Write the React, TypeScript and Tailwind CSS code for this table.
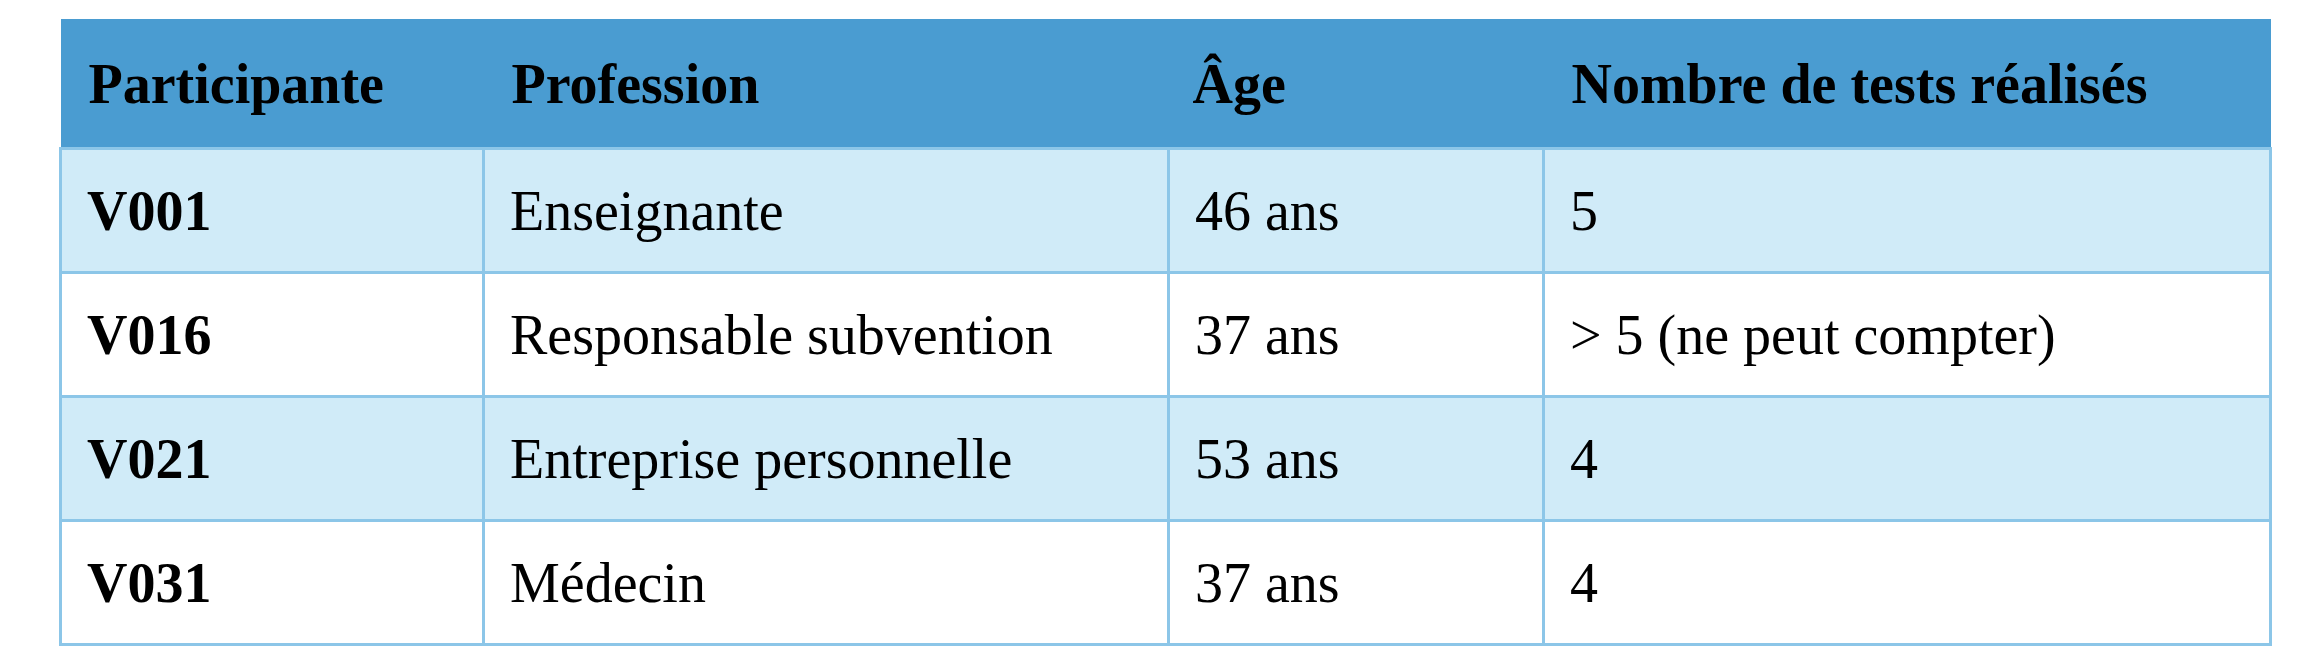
import React from "react";

const rows = [
  ["V001", "Enseignante", "46 ans", "5"],
  ["V016", "Responsable subvention", "37 ans", "> 5 (ne peut compter)"],
  ["V021", "Entreprise personnelle", "53 ans", "4"],
  ["V031", "Médecin", "37 ans", "4"],
];

export default function App() {
  return (
    <div className="w-[2315px] h-[670px] bg-white pl-[59px] pt-[19px] font-['Liberation_Serif','Times_New_Roman',serif] text-black">
      <table className="w-[2210px] border-collapse table-fixed">
        <colgroup>
          <col className="w-[423px]" />
          <col className="w-[685px]" />
          <col className="w-[375px]" />
          <col className="w-[727px]" />
        </colgroup>
        <thead>
          <tr className="h-[129px] bg-[#4a9cd1]">
            {["Participante", "Profession", "Âge", "Nombre de tests réalisés"].map((h, j) => (
              <th
                key={h}
                className={`text-left font-bold text-[56px] align-middle pt-[2px] ${j === 2 ? "pl-[24px]" : "pl-[28px]"}`}
              >
                {h}
              </th>
            ))}
          </tr>
        </thead>
        <tbody>
          {rows.map((r, i) => (
            <tr key={r[0]} className={`h-[124px] ${i % 2 === 0 ? "bg-[#d0ebf8]" : "bg-white"}`}>
              {r.map((c, j) => (
                <td
                  key={j}
                  className={`border-[3px] border-[#8cc6e8] text-[56px] pl-[25px] pt-[2px] align-middle ${j === 0 ? "font-bold" : "font-normal"}`}
                >
                  {c}
                </td>
              ))}
            </tr>
          ))}
        </tbody>
      </table>
    </div>
  );
}
